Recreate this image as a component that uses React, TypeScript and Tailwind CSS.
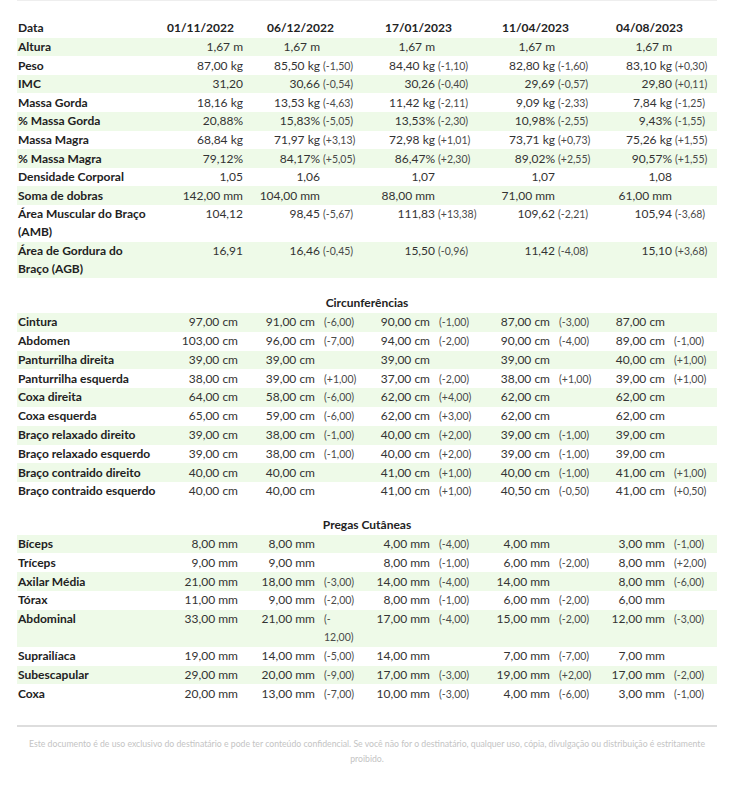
import React from "react";

type Row = [string, string[]];

const dates = ["01/11/2022", "06/12/2022", "17/01/2023", "11/04/2023", "04/08/2023"];

const resumo: Row[] = [
  ["Altura", ["1,67 m", "1,67 m", "1,67 m", "1,67 m", "1,67 m"]],
  ["Peso", ["87,00 kg", "85,50 kg (-1,50)", "84,40 kg (-1,10)", "82,80 kg (-1,60)", "83,10 kg (+0,30)"]],
  ["IMC", ["31,20", "30,66 (-0,54)", "30,26 (-0,40)", "29,69 (-0,57)", "29,80 (+0,11)"]],
  ["Massa Gorda", ["18,16 kg", "13,53 kg (-4,63)", "11,42 kg (-2,11)", "9,09 kg (-2,33)", "7,84 kg (-1,25)"]],
  ["% Massa Gorda", ["20,88%", "15,83% (-5,05)", "13,53% (-2,30)", "10,98% (-2,55)", "9,43% (-1,55)"]],
  ["Massa Magra", ["68,84 kg", "71,97 kg (+3,13)", "72,98 kg (+1,01)", "73,71 kg (+0,73)", "75,26 kg (+1,55)"]],
  ["% Massa Magra", ["79,12%", "84,17% (+5,05)", "86,47% (+2,30)", "89,02% (+2,55)", "90,57% (+1,55)"]],
  ["Densidade Corporal", ["1,05", "1,06", "1,07", "1,07", "1,08"]],
  ["Soma de dobras", ["142,00 mm", "104,00 mm", "88,00 mm", "71,00 mm", "61,00 mm"]],
  ["Área Muscular do Braço\n(AMB)", ["104,12", "98,45 (-5,67)", "111,83 (+13,38)", "109,62 (-2,21)", "105,94 (-3,68)"]],
  ["Área de Gordura do\nBraço (AGB)", ["16,91", "16,46 (-0,45)", "15,50 (-0,96)", "11,42 (-4,08)", "15,10 (+3,68)"]],
];

const circunferencias: Row[] = [
  ["Cintura", ["97,00 cm", "91,00 cm (-6,00)", "90,00 cm (-1,00)", "87,00 cm (-3,00)", "87,00 cm"]],
  ["Abdomen", ["103,00 cm", "96,00 cm (-7,00)", "94,00 cm (-2,00)", "90,00 cm (-4,00)", "89,00 cm (-1,00)"]],
  ["Panturrilha direita", ["39,00 cm", "39,00 cm", "39,00 cm", "39,00 cm", "40,00 cm (+1,00)"]],
  ["Panturrilha esquerda", ["38,00 cm", "39,00 cm (+1,00)", "37,00 cm (-2,00)", "38,00 cm (+1,00)", "39,00 cm (+1,00)"]],
  ["Coxa direita", ["64,00 cm", "58,00 cm (-6,00)", "62,00 cm (+4,00)", "62,00 cm", "62,00 cm"]],
  ["Coxa esquerda", ["65,00 cm", "59,00 cm (-6,00)", "62,00 cm (+3,00)", "62,00 cm", "62,00 cm"]],
  ["Braço relaxado direito", ["39,00 cm", "38,00 cm (-1,00)", "40,00 cm (+2,00)", "39,00 cm (-1,00)", "39,00 cm"]],
  ["Braço relaxado esquerdo", ["39,00 cm", "38,00 cm (-1,00)", "40,00 cm (+2,00)", "39,00 cm (-1,00)", "39,00 cm"]],
  ["Braço contraido direito", ["40,00 cm", "40,00 cm", "41,00 cm (+1,00)", "40,00 cm (-1,00)", "41,00 cm (+1,00)"]],
  ["Braço contraido esquerdo", ["40,00 cm", "40,00 cm", "41,00 cm (+1,00)", "40,50 cm (-0,50)", "41,00 cm (+0,50)"]],
];

const pregas: Row[] = [
  ["Bíceps", ["8,00 mm", "8,00 mm", "4,00 mm (-4,00)", "4,00 mm", "3,00 mm (-1,00)"]],
  ["Tríceps", ["9,00 mm", "9,00 mm", "8,00 mm (-1,00)", "6,00 mm (-2,00)", "8,00 mm (+2,00)"]],
  ["Axilar Média", ["21,00 mm", "18,00 mm (-3,00)", "14,00 mm (-4,00)", "14,00 mm", "8,00 mm (-6,00)"]],
  ["Tórax", ["11,00 mm", "9,00 mm (-2,00)", "8,00 mm (-1,00)", "6,00 mm (-2,00)", "6,00 mm"]],
  ["Abdominal", ["33,00 mm", "21,00 mm (-\n12,00)", "17,00 mm (-4,00)", "15,00 mm (-2,00)", "12,00 mm (-3,00)"]],
  ["Suprailíaca", ["19,00 mm", "14,00 mm (-5,00)", "14,00 mm", "7,00 mm (-7,00)", "7,00 mm"]],
  ["Subescapular", ["29,00 mm", "20,00 mm (-9,00)", "17,00 mm (-3,00)", "19,00 mm (+2,00)", "17,00 mm (-2,00)"]],
  ["Coxa", ["20,00 mm", "13,00 mm (-7,00)", "10,00 mm (-3,00)", "4,00 mm (-6,00)", "3,00 mm (-1,00)"]],
];

// label | v1 d1 | v2 d2 | v3 d3 | v4 d4 | v5 d5
const topCols =
  "grid grid-cols-[143px_83px_12px_65px_60px_55px_62px_58px_57px_60px_38px]";
const listCols =
  "grid grid-cols-[148px_73px_17px_60px_60px_55px_60px_60px_55px_60px_45px]";

const headerPad = ["pl-[7px]", "pl-[12px]", "pl-[5px]", "pl-[5px]", "pl-[4px]"];

function split(cell: string) {
  const i = cell.indexOf(" (");
  if (i < 0) return [cell, ""];
  return [cell.slice(0, i), cell.slice(i + 1)];
}

function DataRow({ row, idx, cols, gap, lh }: { row: Row; idx: number; cols: string; gap: string; lh: string }) {
  const [label, cells] = row;
  return (
    <div className={`${cols} ${lh} py-[0.3px] ${idx % 2 === 0 ? "bg-[#eefae8]" : ""}`}>
      <div className="pl-[1px] font-bold text-[#222] whitespace-pre-line">{label}</div>
      {cells.map((c, i) => {
        const [value, delta] = split(c);
        return (
          <React.Fragment key={i}>
            <div className="text-right whitespace-nowrap text-[#333]">{value}</div>
            <div className={`${gap} text-[10.5px] text-[#4a4a4a] whitespace-pre-line`}>{delta}</div>
          </React.Fragment>
        );
      })}
    </div>
  );
}

function Section({ title, rows, space }: { title: string; rows: Row[]; space: string }) {
  return (
    <div className={space}>
      <div className="text-center font-bold text-[#222] leading-[18.7px]">{title}</div>
      {rows.map((r, i) => (
        <DataRow key={r[0]} row={r} idx={i} cols={listCols} gap="pl-[9px]" lh="leading-[18.2px]" />
      ))}
    </div>
  );
}

export default function App() {
  return (
    <div className="w-[734px] min-h-[800px] bg-white px-[17px] font-['Lato','Liberation_Sans',sans-serif] text-[12px]">
      <div className="border-t border-[#eeeeee]" />
      <div className="pt-[18px]">
        <div className={`${topCols} leading-[18.7px] font-bold text-[#222]`}>
          <div className="pl-[1px]">Data</div>
          {dates.map((d, i) => (
            <div key={d} className={`col-span-2 ${headerPad[i]}`}>
              {d}
            </div>
          ))}
        </div>
        {resumo.map((r, i) => (
          <DataRow key={r[0]} row={r} idx={i} cols={topCols} gap="pl-[3px]" lh="leading-[18px]" />
        ))}
      </div>

      <Section title="Circunferências" rows={circunferencias} space="mt-[16px]" />
      <Section title="Pregas Cutâneas" rows={pregas} space="mt-[15px]" />

      <div className="mt-[22px] border-t-2 border-[#dddddd]" />
      <p className="mt-[9px] px-[12px] text-center text-[8.7px] leading-[15px] text-[#c4c4c4]">
        Este documento é de uso exclusivo do destinatário e pode ter conteúdo confidencial. Se você não for o
        destinatário, qualquer uso, cópia, divulgação ou distribuição é estritamente proibido.
      </p>
    </div>
  );
}
